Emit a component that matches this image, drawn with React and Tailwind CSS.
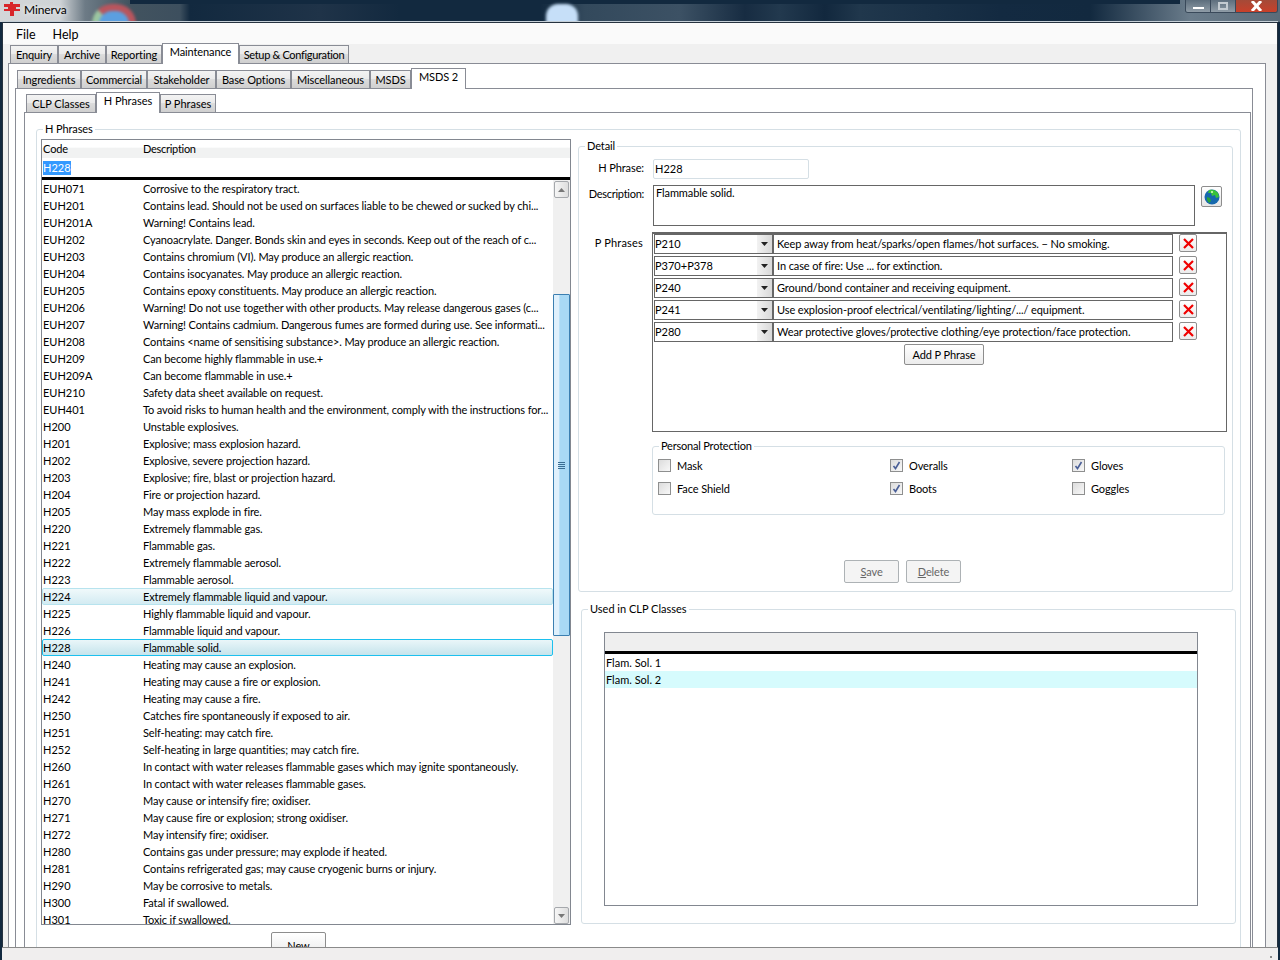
const hPhrases = [
  ['EUH071', 'Corrosive to the respiratory tract.'],
  ['EUH201', 'Contains lead. Should not be used on surfaces liable to be chewed or sucked by chi...'],
  ['EUH201A', 'Warning! Contains lead.'],
  ['EUH202', 'Cyanoacrylate. Danger. Bonds skin and eyes in seconds. Keep out of the reach of c...'],
  ['EUH203', 'Contains chromium (VI). May produce an allergic reaction.'],
  ['EUH204', 'Contains isocyanates. May produce an allergic reaction.'],
  ['EUH205', 'Contains epoxy constituents. May produce an allergic reaction.'],
  ['EUH206', 'Warning! Do not use together with other products. May release dangerous gases (c...'],
  ['EUH207', 'Warning! Contains cadmium. Dangerous fumes are formed during use. See informati...'],
  ['EUH208', 'Contains <name of sensitising substance>. May produce an allergic reaction.'],
  ['EUH209', 'Can become highly flammable in use.+'],
  ['EUH209A', 'Can become flammable in use.+'],
  ['EUH210', 'Safety data sheet available on request.'],
  ['EUH401', 'To avoid risks to human health and the environment, comply with the instructions for...'],
  ['H200', 'Unstable explosives.'],
  ['H201', 'Explosive; mass explosion hazard.'],
  ['H202', 'Explosive, severe projection hazard.'],
  ['H203', 'Explosive; fire, blast or projection hazard.'],
  ['H204', 'Fire or projection hazard.'],
  ['H205', 'May mass explode in fire.'],
  ['H220', 'Extremely flammable gas.'],
  ['H221', 'Flammable gas.'],
  ['H222', 'Extremely flammable aerosol.'],
  ['H223', 'Flammable aerosol.'],
  ['H224', 'Extremely flammable liquid and vapour.'],
  ['H225', 'Highly flammable liquid and vapour.'],
  ['H226', 'Flammable liquid and vapour.'],
  ['H228', 'Flammable solid.'],
  ['H240', 'Heating may cause an explosion.'],
  ['H241', 'Heating may cause a fire or explosion.'],
  ['H242', 'Heating may cause a fire.'],
  ['H250', 'Catches fire spontaneously if exposed to air.'],
  ['H251', 'Self-heating: may catch fire.'],
  ['H252', 'Self-heating in large quantities; may catch fire.'],
  ['H260', 'In contact with water releases flammable gases which may ignite spontaneously.'],
  ['H261', 'In contact with water releases flammable gases.'],
  ['H270', 'May cause or intensify fire; oxidiser.'],
  ['H271', 'May cause fire or explosion; strong oxidiser.'],
  ['H272', 'May intensify fire; oxidiser.'],
  ['H280', 'Contains gas under pressure; may explode if heated.'],
  ['H281', 'Contains refrigerated gas; may cause cryogenic burns or injury.'],
  ['H290', 'May be corrosive to metals.'],
  ['H300', 'Fatal if swallowed.'],
  ['H301', 'Toxic if swallowed.'],
]

const pPhrases = [
  ['P210', 'Keep away from heat/sparks/open flames/hot surfaces. \u2212 No smoking.'],
  ['P370+P378', 'In case of fire: Use ... for extinction.'],
  ['P240', 'Ground/bond container and receiving equipment.'],
  ['P241', 'Use explosion-proof electrical/ventilating/lighting/.../ equipment.'],
  ['P280', 'Wear protective gloves/protective clothing/eye protection/face protection.'],
]

function Tabs({ tabs, className }) {
  return (
    <div className={`flex shrink-0 items-end pl-[2px] ${className}`}>
      {tabs.map(t => (
        <div
          key={t.label}
          style={{ width: t.w }}
          className={t.active
            ? 'relative z-10 -mb-px h-[21px] whitespace-nowrap border border-b-0 border-[#898c95] bg-white text-center leading-[16px]'
            : 'h-[18px] whitespace-nowrap border border-b-0 border-[#898c95] bg-[linear-gradient(#f3f3f3,#ebebeb_45%,#dcdcdc_50%,#cfcfcf)] text-center leading-[18px]'}
        >
          <span className={t.tight ? 'tracking-[-0.33px]' : ''}>{t.label}</span>
        </div>
      ))}
    </div>
  )
}

function Group({ title, className, children }) {
  return (
    <fieldset className={`rounded-[3px] border border-[#d5dfe5] ${className}`}>
      <legend className="ml-[6px] px-[2px] leading-[16px]">{title}</legend>
      {children}
    </fieldset>
  )
}

function ScrollArrow({ up }) {
  return (
    <div className="mx-px flex h-[17px] shrink-0 items-center justify-center rounded-[2px] border border-[#a5a8ac] bg-[linear-gradient(90deg,#f6f6f6,#dedede)]">
      <svg width="7" height="4" viewBox="0 0 7 4">
        <path d={up ? 'M0 4 L3.5 0 L7 4 Z' : 'M0 0 L3.5 4 L7 0 Z'} fill="#777" />
      </svg>
    </div>
  )
}

function Scrollbar() {
  return (
    <div className="flex w-[17px] shrink-0 flex-col bg-[#f0f0f0] pt-px">
      <ScrollArrow up />
      <div className="h-[96px] shrink-0" />
      <div className="flex h-[342px] shrink-0 items-center justify-center rounded-[1px] border border-[#3c7fb1] bg-[linear-gradient(90deg,#dff0fc,#dff0fc_30%,#a9d9f5_40%,#a9d9f5)]">
        <div className="flex w-[7px] flex-col gap-px">
          <div className="h-px bg-[#3a6d92]" />
          <div className="h-px bg-[#3a6d92]" />
          <div className="h-px bg-[#3a6d92]" />
          <div className="h-px bg-[#3a6d92]" />
        </div>
      </div>
      <div className="flex-1" />
      <ScrollArrow />
    </div>
  )
}

function Row({ code, text }) {
  const hot = code === 'H224'
  const sel = code === 'H228'
  let cls = 'border-transparent'
  if (hot) cls = 'rounded-[2px] border-[#b7e3ee] bg-[linear-gradient(#f0f9fb,#d3ebf2)]'
  if (sel) cls = 'rounded-[2px] border-[#1cc0ee] bg-[linear-gradient(#eaf6f9,#c5e4ec)]'
  return (
    <div className={`flex h-[17px] shrink-0 items-center overflow-hidden whitespace-nowrap border pt-px ${cls}`}>
      <div className="w-[100px] shrink-0 tracking-[0px]">{code}</div>
      <div className="tracking-[-0.12px]">{text}</div>
    </div>
  )
}

function HList() {
  return (
    <div className="flex h-[786px] w-[530px] flex-col border border-[#828790] bg-white">
      <div className="flex h-[18px] shrink-0 items-center bg-[linear-gradient(#fff,#fff_40%,#f1f2f2_45%,#f1f2f2)] pt-px">
        <div className="w-[100px] pl-px">Code</div>
        <div className="pl-px tracking-[-0.28px]">Description</div>
      </div>
      <div className="flex h-[19px] shrink-0 items-center pl-px">
        <span className="bg-[#3399ff] leading-[14px] tracking-[0px] text-white">H228</span>
      </div>
      <div className="h-[3px] shrink-0 bg-black" />
      <div className="flex min-h-0 flex-1">
        <div className="flex min-w-0 flex-1 flex-col overflow-hidden">
          {hPhrases.map(r => <Row key={r[0]} code={r[0]} text={r[1]} />)}
        </div>
        <Scrollbar />
      </div>
    </div>
  )
}

function Globe() {
  return (
    <svg width="16" height="16" viewBox="0 0 16 16">
      <circle cx="8" cy="8" r="7.5" fill="#1668ad" />
      <path d="M5 1 C8 0 12 1 14 4 L15 8 L12 9 L11 6 L8 7 L7 4 L4 4 Z" fill="#39c23a" />
      <path d="M3 8 L6 9 L7 12 L5 14 L3 11 Z" fill="#2aa53a" />
      <path d="M7 2 L9 2 L9 4 L7 4 Z" fill="#b6f0a0" />
    </svg>
  )
}

function RedX() {
  return (
    <svg width="11" height="11" viewBox="0 0 11 11">
      <path d="M1 1 L10 10 M10 1 L1 10" stroke="#f00000" strokeWidth="2.2" fill="none" />
    </svg>
  )
}

function PRow({ code, text }) {
  return (
    <div className="flex h-[20px] shrink-0">
      <div className="flex h-[20px] w-[119px] items-center border border-[#666] tracking-[0px]">
        <span className="flex-1">{code}</span>
        <div className="flex h-[18px] w-[15px] items-center justify-center bg-[linear-gradient(90deg,#f2f2f2,#d8d8d8)]">
          <svg width="7" height="4" viewBox="0 0 7 4"><path d="M0 0 L3.5 4 L7 0 Z" fill="#222" /></svg>
        </div>
      </div>
      <div className="flex h-[20px] w-[400px] items-center overflow-hidden whitespace-nowrap border border-[#666] pl-[3px]">{text}</div>
      <div className="ml-[6px] flex h-[18px] w-[18px] items-center justify-center rounded-[2px] border border-[#8d8d8d] bg-[linear-gradient(#fff,#ececec)]">
        <RedX />
      </div>
    </div>
  )
}

function Check({ label, checked }) {
  return (
    <div className="flex h-[17px] items-center">
      <div className="flex h-[13px] w-[13px] shrink-0 items-center justify-center border border-[#8e8f8f] bg-[linear-gradient(135deg,#dcdcdc,#f8f8f8)]">
        {checked && (
          <svg width="9" height="9" viewBox="0 0 9 9">
            <path d="M1.5 5 L3.5 7.5 L7.5 1" stroke="#4a5f97" strokeWidth="1.6" fill="none" />
          </svg>
        )}
      </div>
      <span className="ml-[6px] pt-px">{label}</span>
    </div>
  )
}

function Detail() {
  return (
    <Group title="Detail" className="h-[454px] w-[655px]">
      <div className="mt-[5px] flex h-[20px] items-center gap-[8px]">
        <div className="-mt-px w-[66px] pr-px text-right">H Phrase:</div>
        <div className="flex h-[20px] w-[156px] items-center rounded-[2px] border border-[#d5dfe5] pl-px tracking-[0px]">H228</div>
      </div>
      <div className="mt-[6px] flex gap-[8px]">
        <div className="w-[66px] pr-px pt-px text-right tracking-[-0.28px]">Description:</div>
        <div className="h-[41px] w-[542px] border border-[#666] pl-[2px] leading-[14px]">Flammable solid.</div>
        <div className="-ml-[2px] mt-px flex h-[21px] w-[21px] items-center justify-center rounded-[2px] border border-[#8d8d8d] bg-[linear-gradient(#fff,#e6e6e6)]">
          <Globe />
        </div>
      </div>
      <div className="mt-[6px] flex gap-[7px]">
        <div className="w-[66px] pr-[2px] pt-[3px] text-right tracking-[0.2px]">P Phrases</div>
        <div className="flex h-[200px] w-[575px] flex-col border border-t-2 border-[#666] pl-px">
          <div className="flex flex-col gap-[2px]">
            {pPhrases.map(p => <PRow key={p[0]} code={p[0]} text={p[1]} />)}
          </div>
          <div className="ml-[250px] mt-[2px] flex h-[21px] w-[80px] items-center justify-center rounded-[2px] border border-[#8d8d8d] bg-[linear-gradient(#fff,#ececec)] pt-px">Add P Phrase</div>
        </div>
      </div>
      <div className="ml-[73px]">
        <Group title="Personal Protection" className="mt-[6px] h-[77px] w-[573px] tracking-[-0.2px]">
          <div className="grid grid-cols-[232px_182px_1fr] gap-y-[6px] pl-[5px] pt-[3px] tracking-[-0.1px]">
            <Check label="Mask" />
            <Check label="Overalls" checked />
            <Check label="Gloves" checked />
            <Check label="Face Shield" />
            <Check label="Boots" checked />
            <Check label="Goggles" />
          </div>
        </Group>
      </div>
      <div className="ml-[265px] mt-[45px] flex gap-[7px] text-[#666]">
        <div className="flex h-[23px] w-[55px] items-center justify-center rounded-[2px] border border-[#adb2b5] bg-[#f4f4f4] pt-px"><span><u>S</u>ave</span></div>
        <div className="flex h-[23px] w-[55px] items-center justify-center rounded-[2px] border border-[#adb2b5] bg-[#f4f4f4] pt-px"><span><u>D</u>elete</span></div>
      </div>
    </Group>
  )
}

function UsedIn() {
  return (
    <Group title="Used in CLP Classes" className="ml-[3px] mt-[9px] h-[323px] w-[655px] tracking-[0px]">
      <div className="ml-[22px] mt-[15px] flex h-[274px] w-[594px] flex-col border border-[#828790]">
        <div className="h-[18px] shrink-0 bg-[#efefef]" />
        <div className="h-[3px] shrink-0 bg-black" />
        <div className="flex h-[17px] items-center pl-px pt-px">Flam. Sol. 1</div>
        <div className="flex h-[17px] items-center bg-[#d6fbfd] pl-px pt-px">Flam. Sol. 2</div>
      </div>
    </Group>
  )
}

function TitleBar() {
  return (
    <div className="relative flex h-[22px] shrink-0 overflow-hidden bg-[linear-gradient(90deg,#d3d6d8_0,#cfd3d6_60px,#6d7b86_85px,#42535f_130px,#3d4f5e_180px,#12293f_190px,#1f3348_320px,#12293f_400px,#12293f_540px,#33495c_585px,#3c5164_680px,#172c42_745px,#22394e_780px,#12283e_825px,#20374c_860px,#132a41_1000px,#12293f_1090px,#6a7c8b_1190px,#5a6b79_1280px)]">
      {/* blurred desktop behind the glass */}
      <div className="absolute left-[130px] right-[100px] top-0 h-[4px] bg-[#12293f]" />
      <div className="absolute left-[92px] top-[4px] h-[40px] w-[44px] rounded-full border-[7px] border-[#b9555d] border-b-[#4f9e55] border-l-[#9cc6a0] bg-[#5b9fe0] blur-[1.5px]" />
      <div className="absolute left-[546px] top-[4px] h-[30px] w-[32px] rounded-t-[12px] bg-[#c6dff8] blur-[1.5px]" />
      <svg width="18" height="16" viewBox="0 0 18 16" className="relative ml-[3px] mt-[1px] shrink-0">
        <path d="M7 1 H10 V3 H17 V6 H13 V8 H17 V10 H11 V15 H7 V10 H1 V8 H5 V6 H1 V3 H7 Z" fill="#d8262a" />
      </svg>
      <span className="relative ml-[3px] mt-[2px] text-[12px] leading-[16px] text-black [text-shadow:0_0_5px_#fff]">Minerva</span>
      <div className="relative ml-auto mr-[2px] flex h-[13px] w-[93px] overflow-hidden rounded-b-[3px] border border-t-0 border-[#39495a]">
        <div className="flex w-[25px] items-center justify-center border-r border-[#39495a] bg-[linear-gradient(#5d6e7d,#8f9ca7)]">
          <div className="mt-[3px] h-[2px] w-[11px] bg-white" />
        </div>
        <div className="flex w-[25px] items-center justify-center border-r border-[#39495a] bg-[linear-gradient(#5d6e7d,#8f9ca7)]">
          <div className="h-[8px] w-[10px] border-2 border-[#c3cbd1]" />
        </div>
        <div className="flex flex-1 items-center justify-center bg-[linear-gradient(#a44a38,#c8402a)]">
          <svg width="13" height="10" viewBox="0 0 13 10"><path d="M2 0 L11 10 M11 0 L2 10" stroke="#fff" strokeWidth="3" /></svg>
        </div>
      </div>
    </div>
  )
}

export default function App() {
  return (
    <div className="flex h-[960px] w-[1280px] flex-col overflow-hidden bg-[#12293f] font-['Lato',sans-serif] text-[11px] tracking-[-0.1px] text-black">
      <TitleBar />
      <div className="relative z-10 mx-[2px] flex min-h-0 flex-1 flex-col border-x border-t border-[#26323f] bg-[#f0f0f0] shadow-[0_-1px_0_#c6d0d8]">
        {/* menu */}
        <div className="flex h-[21px] shrink-0 items-center gap-[17px] bg-[#fafafa] pl-[13px] pt-[4px] text-[12.5px] tracking-[0px]">
          <span>File</span>
          <span>Help</span>
        </div>

        <Tabs
          className="ml-[5px] h-[19px]"
          tabs={[
            { label: 'Enquiry', w: 48 },
            { label: 'Archive', w: 48 },
            { label: 'Reporting', w: 56 },
            { label: 'Maintenance', w: 77, active: true },
            { label: 'Setup & Configuration', w: 110, tight: true },
          ]}
        />
        <div className="ml-[5px] mr-[11px] flex min-h-0 flex-1 flex-col overflow-hidden border-x border-t border-[#898c95] bg-white">
          <Tabs
            className="ml-[6px] h-[24px]"
            tabs={[
              { label: 'Ingredients', w: 64 },
              { label: 'Commercial', w: 66 },
              { label: 'Stakeholder', w: 69 },
              { label: 'Base Options', w: 75 },
              { label: 'Miscellaneous', w: 79 },
              { label: 'MSDS', w: 41 },
              { label: 'MSDS 2', w: 55, active: true },
            ]}
          />
          <div className="ml-[6px] mr-[12px] flex min-h-0 flex-1 flex-col overflow-hidden border-x border-t border-[#898c95]">
            <Tabs
              className="ml-[8px] h-[23px] tracking-[0px]"
              tabs={[
                { label: 'CLP Classes', w: 70 },
                { label: 'H Phrases', w: 64, active: true },
                { label: 'P Phrases', w: 56 },
              ]}
            />
            <div className="ml-[8px] mr-px flex min-h-0 flex-1 flex-col overflow-hidden border-x border-t border-[#898c95] pl-[11px] pr-[9px] pt-[8px]">
              <Group title="H Phrases" className="h-[900px] shrink-0">
                <div className="ml-[4px] mt-[2px] flex gap-[7px]">
                  <div className="w-[530px] shrink-0">
                    <HList />
                    <div className="ml-[230px] mt-[7px] flex h-[30px] w-[55px] justify-center rounded-[2px] border border-[#8d8d8d] bg-[linear-gradient(#fff,#e6e6e6)] pt-[5px]">New</div>
                  </div>
                  <div className="-mt-[1px] w-[658px] shrink-0">
                    <Detail />
                    <UsedIn />
                  </div>
                </div>
              </Group>
            </div>
          </div>
        </div>
      </div>
      {/* status bar */}
      <div className="relative z-20 mx-[2px] flex h-[13px] shrink-0 justify-end border-t border-[#8a8a8a] bg-[#f0eeee] pr-[6px] pt-[8px]">
        <div className="h-[2px] w-[2px] bg-[#8a8a8a]" />
      </div>
    </div>
  )
}
